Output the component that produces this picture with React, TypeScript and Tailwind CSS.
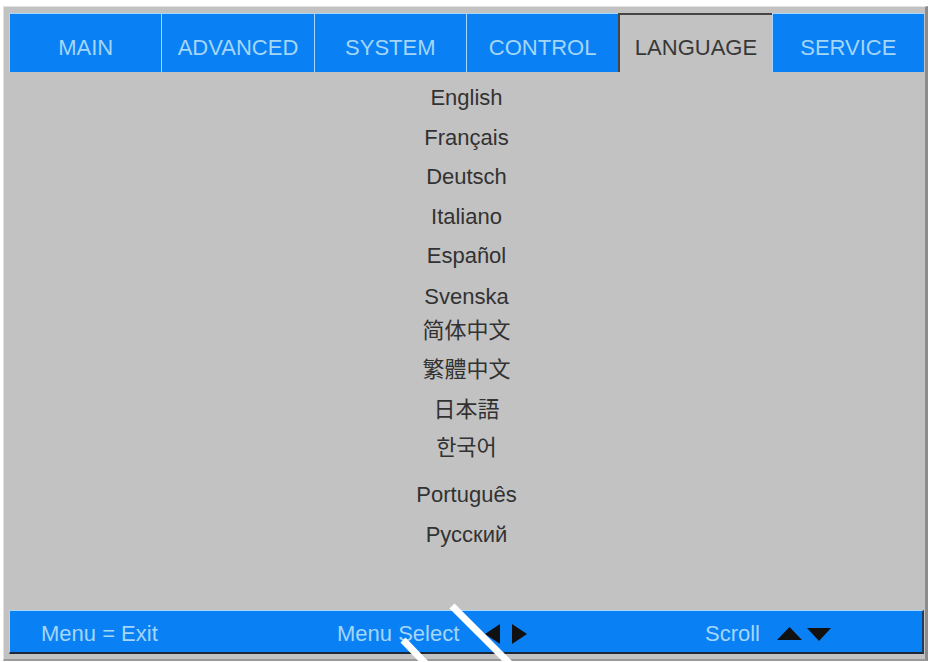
const tabs = ["MAIN", "ADVANCED", "SYSTEM", "CONTROL", "LANGUAGE", "SERVICE"];
const activeTab = "LANGUAGE";

const languages = [
  { label: "English", gap: "mt-[13px]", font: "" },
  { label: "Français", gap: "mt-[14px]", font: "" },
  { label: "Deutsch", gap: "mt-[13px]", font: "" },
  { label: "Italiano", gap: "mt-[14px]", font: "" },
  { label: "Español", gap: "mt-[13px]", font: "" },
  { label: "Svenska", gap: "mt-[15px]", font: "" },
  { label: "简体中文", gap: "mt-[8px]", font: "font-['Liberation_Sans','Noto_Sans_CJK_SC',sans-serif]" },
  { label: "繁體中文", gap: "mt-[13px]", font: "font-['Liberation_Sans','Noto_Sans_CJK_TC',sans-serif]" },
  { label: "日本語", gap: "mt-[14px]", font: "font-['Liberation_Sans','Noto_Sans_CJK_JP',sans-serif]" },
  { label: "한국어", gap: "mt-[12px]", font: "font-['Liberation_Sans','Noto_Sans_CJK_KR',sans-serif]" },
  { label: "Português", gap: "mt-[21px]", font: "" },
  { label: "Русский", gap: "mt-[14px]", font: "" },
];

function LeftRight() {
  return (
    <svg width="42" height="20" viewBox="0 0 42 20" className="ml-[26px]">
      <polygon points="15,0 15,20 0,10" fill="#111" />
      <polygon points="27,0 27,20 42,10" fill="#111" />
    </svg>
  );
}

function UpDown() {
  return (
    <svg width="54" height="14" viewBox="0 0 54 14" className="ml-[17px]">
      <polygon points="0,13 25,13 12.5,0" fill="#111" />
      <polygon points="30,1 54,1 42,14" fill="#111" />
    </svg>
  );
}

export default function App() {
  return (
    <div className="relative w-[931px] h-[662px] bg-white pl-[3px] pt-[6px] font-['Liberation_Sans',Arial,sans-serif] overflow-hidden">
      <div className="w-[925px] h-[655px] bg-[#c2c2c2] border-l border-t border-[#e2e2e2] border-r-[3px] border-r-[#8c8c8c] border-b-[2px] border-b-[#9a9a9a] pl-[5px] pr-[1px] pt-[6px] pb-[5px] flex flex-col">
        <div className="flex h-[59px]">
          {tabs.map((t) =>
            t === activeTab ? (
              <div
                key={t}
                className="flex-1 flex items-center justify-center pt-[8px] bg-[#c2c2c2] border-l-2 border-t-2 border-[#454545] text-[22px] text-[#383838]"
              >
                {t}
              </div>
            ) : (
              <div
                key={t}
                className="flex-1 flex items-center justify-center pt-[8px] bg-[#0a80f5] border-l border-t border-[#a6d8ff] text-[22px] text-[#a3d6f7]"
              >
                {t}
              </div>
            )
          )}
        </div>

        <div className="flex-1 flex flex-col items-center">
          {languages.map((l) => (
            <div
              key={l.label}
              className={`${l.gap} ${l.font} h-[26px] leading-[26px] text-[22px] text-[#323232]`}
            >
              {l.label}
            </div>
          ))}
        </div>

        <div className="h-[44px] flex items-center pt-[4px] bg-[#0a80f5] border-l border-t border-[#a6d8ff] border-r-2 border-r-[#2a3a55] border-b-2 border-b-[#1d2738] text-[22px] text-[#a3d6f7]">
          <div className="w-[327px] pl-[31px]">Menu = Exit</div>
          <div className="w-[368px] flex items-center">
            <span>Menu Select</span>
            <LeftRight />
          </div>
          <div className="flex items-center">
            <span>Scroll</span>
            <UpDown />
          </div>
        </div>
      </div>

      {/* white pen stroke laid over the footer */}
      <svg
        className="absolute left-0 top-0 pointer-events-none"
        width="931"
        height="662"
        viewBox="0 0 931 662"
      >
        <line x1="452" y1="606" x2="512" y2="666" stroke="#fff" strokeWidth="7" />
        <line x1="403" y1="640" x2="428" y2="666" stroke="#fff" strokeWidth="7" />
      </svg>
    </div>
  );
}
